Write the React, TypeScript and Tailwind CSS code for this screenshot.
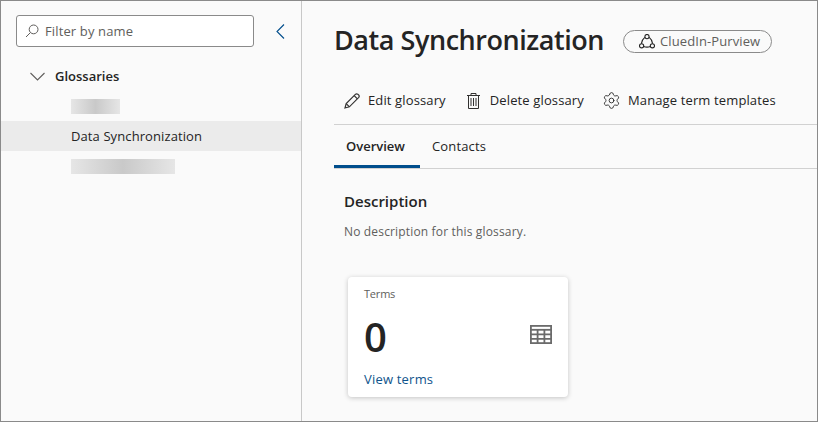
import { Settings } from 'lucide-react';

// Blurred placeholder where a glossary name was redacted
function BlurredName({ width }: { width: string }) {
  return (
    <div className="flex h-[30px] items-center pl-[70px]">
      <div className={`h-[15px] ${width} bg-gradient-to-r from-[#e6e6e6] via-[#c9c9c9] to-[#e6e6e6]`} />
    </div>
  );
}

function SearchIcon() {
  return (
    <svg width="14" height="14" viewBox="0 0 14 14" fill="none" stroke="#605e5c" strokeWidth="1">
      <circle cx="8.6" cy="5.4" r="4.4" />
      <path d="M5.4 8.6 L1 13" />
    </svg>
  );
}

function PencilIcon() {
  return (
    <svg width="16" height="16" viewBox="0 0 16 16" fill="none" stroke="#323130" strokeWidth="1.2">
      <path d="M1 15 L2.2 10.6 L11.6 1.2 Q12.6 0.4 13.8 1.2 L14.8 2.2 Q15.6 3.4 14.8 4.4 L5.4 13.8 Z" />
      <path d="M10.2 2.6 L13.4 5.8 M2.2 10.6 L5.4 13.8" />
    </svg>
  );
}

function TrashIcon() {
  return (
    <svg width="13" height="16" viewBox="0 0 13 16" fill="none" stroke="#323130" strokeWidth="1">
      <path d="M0 2.5H13M4 2.5V0.5H9V2.5" />
      <path d="M1.5 2.5V15.5H11.5V2.5" />
      <path d="M4 5V13M6.5 5V13M9 5V13" />
    </svg>
  );
}

function PurviewIcon() {
  return (
    <svg width="16" height="15" viewBox="0 0 16 15" fill="none" stroke="#242424" strokeWidth="1.1">
      <path d="M5.8 3.4 Q2.6 6 2.4 9.6 M10.2 3.4 Q13.4 6 13.6 9.6 M4.6 12.4 Q8 13.8 11.4 12.4" />
      <circle cx="8" cy="2.6" r="2.1" />
      <circle cx="2.6" cy="11.8" r="2.1" />
      <circle cx="13.4" cy="11.8" r="2.1" />
    </svg>
  );
}

function TableIcon() {
  return (
    <svg width="22" height="19" viewBox="0 0 22 19" fill="none" stroke="#6b6b6b" strokeWidth="1.8">
      <rect x="0.9" y="0.9" width="20.2" height="17.2" />
      <path d="M0.9 4.8H21.1" strokeWidth="1.8" />
      <path d="M0.9 9.3H21.1M0.9 13.8H21.1M7.6 4.8V18.1M14.4 4.8V18.1" />
    </svg>
  );
}

export default function App() {
  return (
    <div className="flex h-[422px] w-[818px] overflow-hidden border border-[#8a8a8a] bg-[#fafafa] font-['Open_Sans','Noto_Sans',sans-serif] text-[#242424]">
      {/* Sidebar */}
      <aside className="w-[301px] shrink-0 border-r border-[#c8c8c8] pt-[14px]">
        <div className="flex items-center pl-[15px]">
          <div className="flex h-[32px] w-[238px] items-center gap-[6px] rounded-[3px] border border-[#8a8a8a] bg-white pl-[8px]">
            <SearchIcon />
            <span className="pt-[2px] text-[13px] tracking-[0.13px] text-[#605e5c]">Filter by name</span>
          </div>
          <svg width="9" height="15" viewBox="0 0 9 15" fill="none" stroke="#004e8c" strokeWidth="1.1" className="ml-[22px]">
            <path d="M8 0.5 L1 7.5 L8 14.5" />
          </svg>
        </div>

        <div className="mt-[14px] flex h-[30px] items-center pl-[29px]">
          <svg width="15" height="9" viewBox="0 0 15 9" fill="none" stroke="#605e5c" strokeWidth="1.1">
            <path d="M0.5 1 L7.5 8 L14.5 1" />
          </svg>
          <span className="ml-[10px] pt-[2px] text-[13px] font-semibold">Glossaries</span>
        </div>
        <BlurredName width="w-[49px]" />
        <div className="flex h-[30px] items-center bg-[#ebebeb] pl-[70px] pt-[2px] text-[13px] tracking-[0.1px]">
          Data Synchronization
        </div>
        <BlurredName width="w-[104px]" />
      </aside>

      {/* Main content */}
      <main className="min-w-0 flex-1 pl-[32px]">
        <div className="flex h-[66px] items-center pt-[12px]">
          <h1 className="pb-[2px] text-[27px] font-semibold leading-none tracking-[-0.45px]">Data Synchronization</h1>
          <div className="ml-[19px] mt-[3px] flex h-[23px] items-center gap-[5px] rounded-full border border-[#8a8a8a] pl-[15px] pr-[11px] text-[13px] tracking-[0.1px] text-[#605e5c]">
            <PurviewIcon />
            CluedIn-Purview
          </div>
        </div>

        <div className="mt-[8px] flex h-[50px] items-center border-b border-[#d1d1d1] pl-[10px] pt-[2px] text-[13px] tracking-[0.13px]">
          <PencilIcon />
          <span className="ml-[8px]">Edit glossary</span>
          <span className="ml-[21px]"><TrashIcon /></span>
          <span className="ml-[10px]">Delete glossary</span>
          <span className="ml-[18px]"><Settings size={19} strokeWidth={1.1} /></span>
          <span className="ml-[7px]">Manage term templates</span>
        </div>

        <div className="flex h-[44px] border-b border-[#d1d1d1] text-[13px]">
          <div className="flex w-[86px] items-center border-b-[3px] border-[#004e8c] pl-[12px] pt-[4px] font-semibold">Overview</div>
          <div className="ml-[12px] flex items-center tracking-[0.15px]">Contacts</div>
        </div>

        <div className="pl-[10px]">
          <h2 className="mt-[22px] text-[15px] font-semibold leading-[20px]">Description</h2>
          <p className="mt-[13px] text-[12px] leading-[16px] tracking-[0.16px] text-[#605e5c]">No description for this glossary.</p>

          <div className="ml-[4px] mt-[37px] h-[120px] w-[220px] rounded-[4px] bg-white pl-[16px] pr-[16px] pt-[10px] shadow-[0_1px_5px_rgba(0,0,0,0.22)]">
            <div className="text-[11px] leading-[14px] tracking-[-0.2px] text-[#605e5c]">Terms</div>
            <div className="mt-[12px] flex items-center justify-between">
              <span className="text-[40px] font-semibold leading-[48px]">0</span>
              <span className="mb-[6px]"><TableIcon /></span>
            </div>
            <div className="mt-[9px] text-[13px] leading-[18px] tracking-[0.2px] text-[#0f548c]">View terms</div>
          </div>
        </div>
      </main>
    </div>
  );
}
